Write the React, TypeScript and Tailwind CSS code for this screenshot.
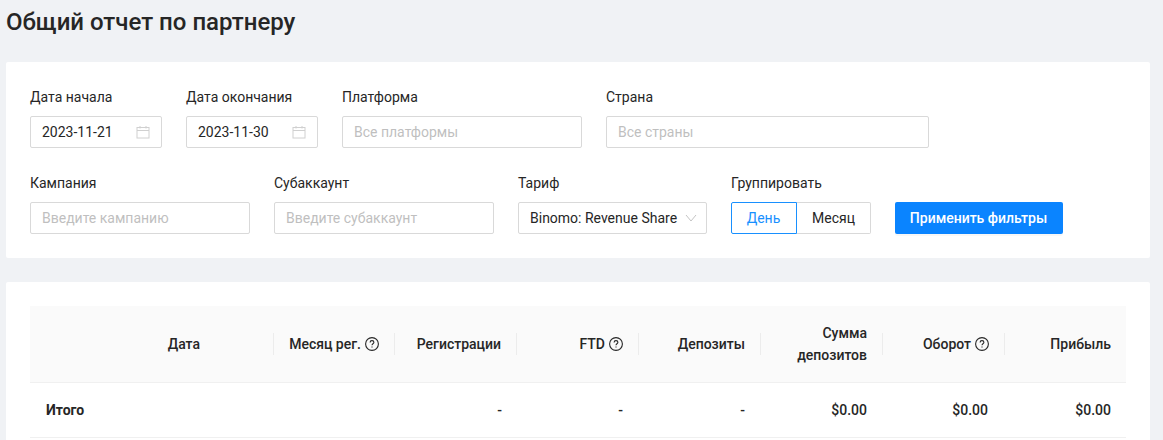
import React from "react";

const Calendar = () => (
  <svg width="14" height="14" viewBox="0 0 14 14" fill="none" stroke="#d0d0d0" strokeWidth="1" className="shrink-0">
    <rect x="1" y="2.5" width="12" height="10.5" />
    <path d="M1 5.5h12M4 1v2.5M10 1v2.5" />
  </svg>
);

const Help = () => (
  <svg width="14" height="14" viewBox="0 0 14 14" fill="none" stroke="#262626" strokeWidth="1.1" className="shrink-0">
    <circle cx="7" cy="7" r="6.4" />
    <path d="M5.1 5.4C5.1 4.3 5.9 3.6 7 3.6s1.9.7 1.9 1.7c0 1.5-1.9 1.4-1.9 3" />
    <path d="M7 9.4v1.1" />
  </svg>
);

const Label = ({ children }: { children: React.ReactNode }) => (
  <div className="h-[22px] leading-[22px] mb-[8px] text-[14px] text-[#262626]">{children}</div>
);

const box = "h-[32px] border border-[#d9d9d9] rounded-[2px] bg-white flex items-center px-[11px] text-[14px]";

const DateField = ({ label, value }: { label: string; value: string }) => (
  <div className="w-[132px] shrink-0">
    <Label>{label}</Label>
    <div className={box + " justify-between text-[#262626]"}>
      <span>{value}</span>
      <Calendar />
    </div>
  </div>
);

const TextField = ({ label, hint, w }: { label: string; hint: string; w: string }) => (
  <div className={w + " shrink-0"}>
    <Label>{label}</Label>
    <div className={box + " text-[#bfbfbf]"}>{hint}</div>
  </div>
);

const Th = ({ children, w, last }: { children: React.ReactNode; w: string; last?: boolean }) => (
  <div className={w + " relative flex items-center justify-end gap-[4px] text-right pl-[16px] font-medium leading-[22px] whitespace-nowrap"}>
    {children}
    {!last && <span className="absolute right-0 top-[27px] h-[22px] w-px bg-[#ececec]" />}
  </div>
);

const Td = ({ children, w }: { children: React.ReactNode; w: string }) => (
  <div className={w + " pl-[16px] text-right font-medium"}>{children}</div>
);

export default function App() {
  return (
    <div className="w-[1163px] h-[440px] overflow-hidden bg-[#f0f2f5] font-['Roboto',sans-serif] text-[#262626] pl-[6px] pr-[13px]">
      <h1 className="h-[62px] pt-[5px] text-[24px] leading-[34px] font-medium text-[#262626]">Общий отчет по партнеру</h1>

      <section className="bg-white h-[196px] px-[24px] pt-[24px] rounded-[2px]">
        <div className="flex gap-[24px]">
          <DateField label="Дата начала" value="2023-11-21" />
          <DateField label="Дата окончания" value="2023-11-30" />
          <TextField label="Платформа" hint="Все платформы" w="w-[240px]" />
          <TextField label="Страна" hint="Все страны" w="w-[323px]" />
        </div>
        <div className="flex gap-[24px] mt-[24px]">
          <TextField label="Кампания" hint="Введите кампанию" w="w-[220px]" />
          <TextField label="Субаккаунт" hint="Введите субаккаунт" w="w-[220px]" />
          <div className="w-[189px] shrink-0">
            <Label>Тариф</Label>
            <div className={box + " justify-between text-[#262626] whitespace-nowrap"}>
              <span>Binomo: Revenue Share</span>
              <svg width="12" height="12" viewBox="0 0 12 12" fill="none" stroke="#c4c4c4" strokeWidth="1" className="shrink-0 -mr-[2px]">
                <path d="M1 3l5 6 5-6" />
              </svg>
            </div>
          </div>
          <div className="shrink-0">
            <Label>Группировать</Label>
            <div className="flex h-[32px] text-[14px]">
              <div className="w-[66px] border border-[#1890ff] text-[#1890ff] rounded-l-[2px] flex items-center justify-center pr-px">День</div>
              <div className="w-[74px] border border-l-0 border-[#d9d9d9] rounded-r-[2px] flex items-center justify-center">Месяц</div>
            </div>
          </div>
          <div className="shrink-0 pt-[30px]">
            <button className="w-[168px] h-[32px] bg-[#0a84ff] text-white text-[14px] font-medium rounded-[2px] shadow-[0_2px_0_rgba(0,0,0,0.03)] pr-px">Применить фильтры</button>
          </div>
        </div>
      </section>

      <section className="bg-white mt-[24px] h-[200px] px-[24px] pt-[24px] rounded-t-[2px] text-[14px]">
        <div className="flex h-[77px] bg-[#fafafa] border-b border-[#f0f0f0]">
          <Th w="w-[244px] pr-[74px]">Дата</Th>
          <Th w="w-[121px] pr-[16px]">Месяц рег. <Help /></Th>
          <Th w="w-[122px] pr-[16px]">Регистрации</Th>
          <Th w="w-[122px] pr-[16px]">FTD <Help /></Th>
          <Th w="w-[122px] pr-[16px]">Депозиты</Th>
          <Th w="w-[122px] pr-[16px]">
            <span className="block">Сумма<br />депозитов</span>
          </Th>
          <Th w="w-[122px] pr-[16px]">Оборот <Help /></Th>
          <Th w="w-[121px] pr-[15px]" last>Прибыль</Th>
        </div>
        <div className="flex h-[55px] items-center border-b border-[#f0f0f0]">
          <div className="w-[244px] pl-[16px] font-bold">Итого</div>
          <Td w="w-[121px] pr-[16px]">{""}</Td>
          <Td w="w-[122px] pr-[15px]">-</Td>
          <Td w="w-[122px] pr-[16px]">-</Td>
          <Td w="w-[122px] pr-[16px]">-</Td>
          <Td w="w-[122px] pr-[16px]">$0.00</Td>
          <Td w="w-[122px] pr-[17px]">$0.00</Td>
          <Td w="w-[121px] pr-[15px]">$0.00</Td>
        </div>
      </section>
    </div>
  );
}
